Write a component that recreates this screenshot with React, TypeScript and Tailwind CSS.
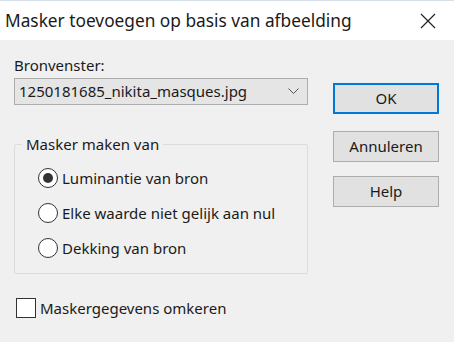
import React, { useState } from "react";

const font = { fontFamily: '"Noto Sans", "Open Sans", sans-serif' };

const Radio = ({ checked, label, onClick }: { checked: boolean; label: string; onClick: () => void }) => (
  <button onClick={onClick} className="flex items-center h-[20px] text-left">
    <span className="w-[20px] h-[20px] rounded-full border-[1.5px] border-[#333333] bg-white flex items-center justify-center">
      {checked && <span className="w-[10px] h-[10px] rounded-full bg-[#333333]" />}
    </span>
    <span className="ml-[4px] text-[15px] text-[#1a1a1a] leading-[20px]">{label}</span>
  </button>
);

export default function App() {
  const [mode, setMode] = useState(0);
  const [invert, setInvert] = useState(false);
  const modes = ["Luminantie van bron", "Elke waarde niet gelijk aan nul", "Dekking van bron"];

  return (
    <div style={font} className="w-[454px] h-[342px] bg-[#f0f0f0] flex flex-col overflow-hidden">
      {/* Title bar */}
      <div className="h-[40px] bg-white border-t border-[#d6e0ea] flex items-center justify-between pl-[5px] pr-[18px] shrink-0">
        <span className="text-[17.3px] text-[#1a1a1a] leading-none">Masker toevoegen op basis van afbeelding</span>
        <svg width="16" height="16" viewBox="0 0 16 16" stroke="#222" strokeWidth="1.2" fill="none">
          <path d="M1 1L15 15M15 1L1 15" />
        </svg>
      </div>

      <div className="flex">
        {/* Left column */}
        <div className="pl-[14px] w-[308px]">
          <div className="mt-[15px] text-[15px] leading-[20px] text-[#1a1a1a]">Bronvenster:</div>
          <div className="mt-[3px] h-[27px] w-[294px] bg-[#e5e5e5] border border-[#adadad] flex items-center justify-between pl-[4px] pr-[8px]">
            <span className="text-[15px] text-[#1a1a1a]">1250181685_nikita_masques.jpg</span>
            <svg width="11" height="7" viewBox="0 0 11 7" fill="none" stroke="#555" strokeWidth="1">
              <path d="M0.5 0.5L5.5 5.5L10.5 0.5" />
            </svg>
          </div>

          <fieldset className="mt-[29px] w-[294px] h-[140px] border border-[#dcdcdc] rounded-[2px]">
            <legend className="ml-[7px] px-[4px] text-[15px] leading-[20px] text-[#1a1a1a]">Masker maken van</legend>
            <div className="flex flex-col gap-[15px] mt-[14px] pl-[23px]">
              {modes.map((m, i) => (
                <Radio key={m} label={m} checked={mode === i} onClick={() => setMode(i)} />
              ))}
            </div>
          </fieldset>

          <button onClick={() => setInvert(!invert)} className="mt-[24px] ml-[2px] flex items-center">
            <span className="w-[20px] h-[20px] border-[1.5px] border-[#333333] bg-white flex items-center justify-center text-[13px]">
              {invert ? "✓" : ""}
            </span>
            <span className="ml-[4px] text-[15px] text-[#1a1a1a] leading-[20px]">Maskergegevens omkeren</span>
          </button>
        </div>

        {/* Right column */}
        <div className="ml-[25px] w-[106px] flex flex-col">
          <button className="mt-[43px] h-[31px] bg-[#e1e1e1] border-2 border-[#0078d7] text-[15px] text-[#1a1a1a]">OK</button>
          <button className="mt-[17px] h-[31px] bg-[#e1e1e1] border border-[#adadad] text-[15px] text-[#1a1a1a]">Annuleren</button>
          <button className="mt-[14px] h-[31px] bg-[#e1e1e1] border border-[#adadad] text-[15px] text-[#1a1a1a]">Help</button>
        </div>
      </div>
    </div>
  );
}
